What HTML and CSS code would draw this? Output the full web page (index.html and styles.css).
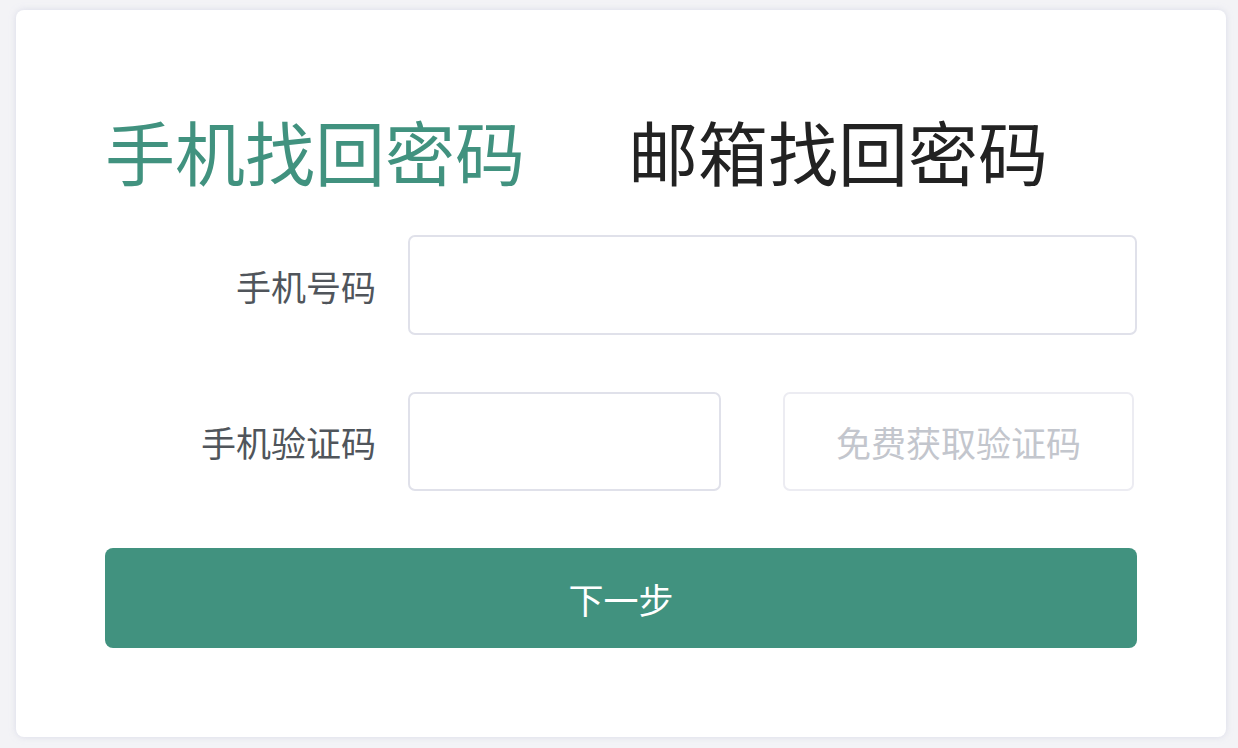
FILE: index.html
```html
<!DOCTYPE html>
<html lang="zh-CN">

<head>
  <meta charset="UTF-8" />
  <meta name="viewport" content="width=device-width, initial-scale=1.0" />
  <title>找回密码</title>
  <link rel="stylesheet" href="styles.css">
</head>

<body>
  <div class="card">
    <div class="tabs">
      <span class="tab active">手机找回密码</span>
      <span class="tab">邮箱找回密码</span>
    </div>
    <form class="form">
      <div class="form-item">
        <label class="form-label">手机号码</label>
        <input class="form-input" type="text" name="phone" />
      </div>
      <div class="form-item">
        <label class="form-label">手机验证码</label>
        <div class="code-row">
          <input class="form-input code-input" type="text" name="code" />
          <button type="button" class="code-btn">免费获取验证码</button>
        </div>
      </div>
      <button type="submit" class="next-btn">下一步</button>
    </form>
  </div>
</body>

</html>
```

FILE: styles.css
```css
body {
  font-family: "Noto Sans CJK SC", "Noto Sans", sans-serif;
  background: #f3f3f6;
  margin: 0;
  padding: 10px 12px 11px 16px;
}

.card {
  background: white;
  border-radius: 8px;
  box-shadow: 0 0 6px rgba(200, 204, 224, 0.6);
  padding: 106px 89px 89px;
  height: 727px;
  box-sizing: border-box;
}

.tabs {
  display: flex;
  gap: 103px;
  font-size: 70px;
  line-height: 70px;
  margin-bottom: 49px;
}

.tab {
  color: #222;
}

.tab.active {
  color: #41927f;
}

.form {
  display: flex;
  flex-direction: column;
}

.form-item {
  display: flex;
  align-items: center;
  margin-bottom: 57px;
}

.form-label {
  width: 303px;
  padding-right: 32px;
  box-sizing: border-box;
  text-align: right;
  font-size: 35px;
  color: #50555b;
}

.form-input {
  flex: 1;
  height: 100px;
  border: 2px solid #e0e1ea;
  border-radius: 7px;
  box-sizing: border-box;
  font-size: 35px;
  padding: 0 30px;
  outline: none;
}

.code-row {
  flex: 1;
  display: flex;
  gap: 62px;
}

.code-input {
  flex: none;
  width: 313px;
  height: 99px;
}

.code-btn {
  width: 351px;
  height: 99px;
  background: white;
  border: 2px solid #ececf2;
  border-radius: 7px;
  color: #c3c6cd;
  font-family: inherit;
  font-size: 35px;
}

.next-btn {
  height: 100px;
  background: #41927f;
  border: none;
  border-radius: 8px;
  color: white;
  font-family: inherit;
  font-size: 35px;
  cursor: pointer;
}
```
